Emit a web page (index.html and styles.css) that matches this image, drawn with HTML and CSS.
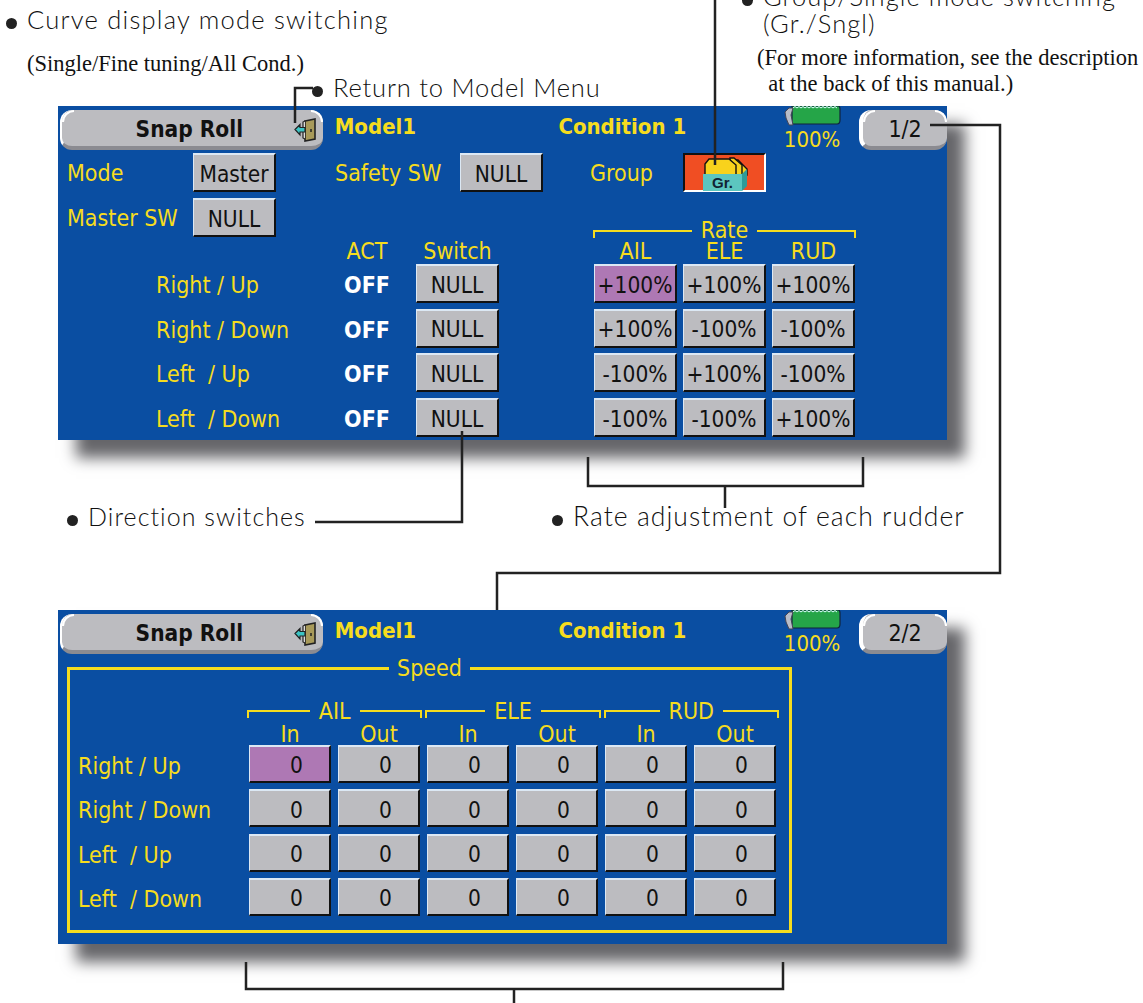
FILE: index.html
```html
<!DOCTYPE html>
<html lang="en">
  <head>
    <meta charset="UTF-8" />
    <title>Snap Roll</title>
    <link rel="stylesheet" href="styles.css">
  </head>
  <body>
    <div class="figure">
      <!-- first screen -->
      <div class="screen screen-one">
        <div class="header">
          <div class="tab title">Snap Roll
            <svg class="door" viewBox="0 0 24 24"><path d="M11 3 L21 1 L21 21 L11 23 Z" fill="#a89a5a" stroke="#222" stroke-width="1.6"/><path d="M11 3 L9 4 L9 20 L11 21" fill="#ddd" stroke="#222" stroke-width="1.2"/><path d="M17 11 v3" stroke="#222" stroke-width="1.5"/><path d="M1 11.5 L6 6.5 V9.5 H11 V14 H6 V17 Z" fill="#3cc4c4" stroke="#222" stroke-width="1.2"/></svg>
          </div>
          <div class="model">Model1</div>
          <div class="condition">Condition 1</div>
          <div class="battery">
            <svg class="battery-icon" viewBox="0 0 58 20"><path d="M9 0 H55 Q57 0 57 3 V14 Q57 18 54 18 H9 Z" fill="#25a548" stroke="#10233c" stroke-width="1.2"/><path d="M10 2 l2 -1.5 l2 1.5 l2 -1.5 l2 1.5 l2 -1.5 l2 1.5 l2 -1.5 l2 1.5 l2 -1.5 l2 1.5 l2 -1.5 l2 1.5 l2 -1.5 l2 1.5 l2 -1.5 l2 1.5 l2 -1.5 l2 1.5 l2 -1.5 l2 1.5 l2 -1.5 l2 1.5" fill="none" stroke="#dff" stroke-width="1"/><path d="M2 6 L6 2 H10 L8 9 L10 19 H6 L3 12 Z" fill="#b8bcc8" stroke="#445" stroke-width="1"/></svg>
            <span>100%</span>
          </div>
          <div class="tab page">1/2</div>
        </div>

        <div class="setup">
          <span class="label">Mode</span>
          <button class="btn">Master</button>
          <span class="label safety">Safety SW</span>
          <button class="btn">NULL</button>
          <span class="label group-label">Group</span>
          <button class="group-btn">
            <svg class="folder" viewBox="0 0 46 37"><g fill="#f8d21c" stroke="#111" stroke-width="1.4"><path d="M31 5 H35 L44 14 V20 H31 Z"/><path d="M27 3 H31 L39 10 V20 H27 Z"/><path d="M2 20 V9 L6 4 H26 L33 10 V20 Z"/></g><path d="M39 19 L44 14 V31 L39 36 Z" fill="#2f9a98"/><rect x="0" y="19" width="39" height="17" fill="#5cc6bf"/><text x="19.5" y="32.5" class="folder-text">Gr.</text></svg>
          </button>
          <span class="label">Master SW</span>
          <button class="btn">NULL</button>
        </div>

        <div class="switches">
          <div class="row head-one">
            <div class="rate-title">
              <div class="bracket"><i class="arm arm-left"></i><span>Rate</span><i class="arm arm-right"></i></div>
            </div>
          </div>
          <div class="row head-two">
            <span class="row-label"></span>
            <span class="row-act label-center">ACT</span>
            <span class="row-switch label-center">Switch</span>
            <div class="rates">
              <span class="label-center">AIL</span>
              <span class="label-center">ELE</span>
              <span class="label-center">RUD</span>
            </div>
          </div>
          <div class="row">
            <span class="row-label">Right / Up</span>
            <span class="row-act off">OFF</span>
            <button class="btn row-switch">NULL</button>
            <div class="rates">
              <button class="btn active">+100%</button>
              <button class="btn">+100%</button>
              <button class="btn">+100%</button>
            </div>
          </div>
          <div class="row">
            <span class="row-label">Right / Down</span>
            <span class="row-act off">OFF</span>
            <button class="btn row-switch">NULL</button>
            <div class="rates">
              <button class="btn">+100%</button>
              <button class="btn">-100%</button>
              <button class="btn">-100%</button>
            </div>
          </div>
          <div class="row">
            <span class="row-label">Left&nbsp; / Up</span>
            <span class="row-act off">OFF</span>
            <button class="btn row-switch">NULL</button>
            <div class="rates">
              <button class="btn">-100%</button>
              <button class="btn">+100%</button>
              <button class="btn">-100%</button>
            </div>
          </div>
          <div class="row">
            <span class="row-label">Left&nbsp; / Down</span>
            <span class="row-act off">OFF</span>
            <button class="btn row-switch">NULL</button>
            <div class="rates">
              <button class="btn">-100%</button>
              <button class="btn">-100%</button>
              <button class="btn">+100%</button>
            </div>
          </div>
        </div>
      </div>

      <!-- second screen -->
      <div class="screen screen-two">
        <div class="header">
          <div class="tab title">Snap Roll
            <svg class="door" viewBox="0 0 24 24"><path d="M11 3 L21 1 L21 21 L11 23 Z" fill="#a89a5a" stroke="#222" stroke-width="1.6"/><path d="M11 3 L9 4 L9 20 L11 21" fill="#ddd" stroke="#222" stroke-width="1.2"/><path d="M17 11 v3" stroke="#222" stroke-width="1.5"/><path d="M1 11.5 L6 6.5 V9.5 H11 V14 H6 V17 Z" fill="#3cc4c4" stroke="#222" stroke-width="1.2"/></svg>
          </div>
          <div class="model">Model1</div>
          <div class="condition">Condition 1</div>
          <div class="battery">
            <svg class="battery-icon" viewBox="0 0 58 20"><path d="M9 0 H55 Q57 0 57 3 V14 Q57 18 54 18 H9 Z" fill="#25a548" stroke="#10233c" stroke-width="1.2"/><path d="M10 2 l2 -1.5 l2 1.5 l2 -1.5 l2 1.5 l2 -1.5 l2 1.5 l2 -1.5 l2 1.5 l2 -1.5 l2 1.5 l2 -1.5 l2 1.5 l2 -1.5 l2 1.5 l2 -1.5 l2 1.5 l2 -1.5 l2 1.5 l2 -1.5 l2 1.5 l2 -1.5 l2 1.5" fill="none" stroke="#dff" stroke-width="1"/><path d="M2 6 L6 2 H10 L8 9 L10 19 H6 L3 12 Z" fill="#b8bcc8" stroke="#445" stroke-width="1"/></svg>
            <span>100%</span>
          </div>
          <div class="tab page">2/2</div>
        </div>

        <div class="speed-frame">
          <div class="frame-title"><span>Speed</span></div>
          <div class="speed-groups">
            <div class="bracket"><i class="arm arm-left"></i><span>AIL</span><i class="arm arm-right"></i></div>
            <div class="bracket"><i class="arm arm-left"></i><span>ELE</span><i class="arm arm-right"></i></div>
            <div class="bracket"><i class="arm arm-left"></i><span>RUD</span><i class="arm arm-right"></i></div>
          </div>
          <div class="speed-row speed-head">
            <span class="speed-label"></span>
            <span>In</span><span>Out</span><span>In</span><span>Out</span><span>In</span><span>Out</span>
          </div>
          <div class="speed-row">
            <span class="speed-label">Right / Up</span>
            <button class="btn num active">0</button><button class="btn num">0</button><button class="btn num">0</button><button class="btn num">0</button><button class="btn num">0</button><button class="btn num">0</button>
          </div>
          <div class="speed-row">
            <span class="speed-label">Right / Down</span>
            <button class="btn num">0</button><button class="btn num">0</button><button class="btn num">0</button><button class="btn num">0</button><button class="btn num">0</button><button class="btn num">0</button>
          </div>
          <div class="speed-row">
            <span class="speed-label">Left&nbsp; / Up</span>
            <button class="btn num">0</button><button class="btn num">0</button><button class="btn num">0</button><button class="btn num">0</button><button class="btn num">0</button><button class="btn num">0</button>
          </div>
          <div class="speed-row">
            <span class="speed-label">Left&nbsp; / Down</span>
            <button class="btn num">0</button><button class="btn num">0</button><button class="btn num">0</button><button class="btn num">0</button><button class="btn num">0</button><button class="btn num">0</button>
          </div>
        </div>
      </div>

      <!-- callouts -->
      <div class="note note-curve">
        <div class="note-title"><i class="dot"></i>Curve display mode switching</div>
        <div class="note-small">(Single/Fine tuning/All Cond.)</div>
      </div>
      <div class="note note-return"><div class="note-title"><i class="dot"></i>Return to Model Menu</div></div>
      <div class="note note-group">
        <div class="note-title"><i class="dot"></i>Group/Single mode switching</div>
        <div class="note-title note-indent">(Gr./Sngl)</div>
        <div class="note-small note-info">(For more information, see the description<br>&nbsp; at the back of this manual.)</div>
      </div>
      <div class="note note-direction"><div class="note-title"><i class="dot"></i>Direction switches</div></div>
      <div class="note note-rate"><div class="note-title"><i class="dot"></i>Rate adjustment of each rudder</div></div>

      <svg class="lines" viewBox="0 0 1143 1003">
        <path d="M313 88 H295 V123" />
        <path d="M715 0 V165" />
        <path d="M930 125 H1000 V573 H497 V610" />
        <path d="M315 522 H462 V431" />
        <path d="M588 457 V486 H863 V457 M725 486 V508" />
        <path d="M246 962 V989 H783 V962 M514 989 V1003" />
      </svg>
    </div>
  </body>
</html>
```

FILE: styles.css
```css
body {
  margin: 0;
  background: white;
}

.figure {
  position: relative;
  width: 1143px;
  height: 1003px;
  overflow: hidden;
  font-family: "DejaVu Sans", sans-serif;
  font-stretch: condensed;
}

.screen {
  width: 889px;
  height: 334px;
  margin-left: 58px;
  background: #0a4ea2;
  box-shadow: 18px 18px 14px #66666a;
  color: #f6dc1e;
  font-size: 23px;
}

.screen-one {
  margin-top: 106px;
}

.screen-two {
  margin-top: 170px;
}

.header {
  display: flex;
  height: 44px;
}

.tab {
  position: relative;
  box-sizing: border-box;
  height: 40px;
  margin-top: 4px;
  background: #bcbcc0;
  color: #111;
  border-bottom: 4px solid #8b8b91;
  border-radius: 12px;
  text-align: center;
  line-height: 38px;
}

/* white arcs on the top corners */
.tab::before,
.tab::after {
  content: "";
  position: absolute;
  top: 0;
  width: 12px;
  height: 12px;
  border-top: 2px solid white;
  box-sizing: border-box;
}

.tab::before {
  left: 0;
  border-left: 2px solid white;
  border-top-left-radius: 12px;
}

.tab::after {
  right: 0;
  border-right: 2px solid white;
  border-top-right-radius: 12px;
}

.title {
  width: 263px;
  margin-left: 2px;
  padding-right: 6px;
  border-left: 2px solid white;
  font-size: 22.5px;
  font-weight: bold;
}

.door {
  position: absolute;
  right: 5px;
  top: 8px;
  width: 24px;
  height: 24px;
}

.model,
.condition {
  font-size: 22px;
  font-weight: bold;
  line-height: 42px;
}

.model {
  width: 224px;
  margin-left: 12px;
}

.condition {
  width: 225px;
}

.battery {
  width: 58px;
  font-size: 22px;
  text-align: center;
  line-height: 27px;
}

.battery-icon {
  display: block;
  width: 58px;
  height: 20px;
}

.page {
  width: 88px;
  margin-left: 18px;
  border-left: 4px solid white;
  font-size: 23px;
}

.setup {
  display: grid;
  grid-template-columns: 126px 83px 59px 125px 83px 47px 93px 83px;
  grid-auto-rows: 39px;
  row-gap: 6px;
  padding: 3px 0 0 9px;
}

.label {
  line-height: 40px;
}

.safety {
  grid-column: 4;
}

.group-label {
  grid-column: 7;
}

.btn {
  box-sizing: border-box;
  width: 83px;
  height: 39px;
  padding: 3px 0 0;
  background: #bcbcc0;
  color: #111;
  border: 2px solid #111;
  border-top-color: #dce8f4;
  border-left-color: #dce8f4;
  border-left-width: 1px;
  font: inherit;
  font-size: 22.5px;
  font-stretch: condensed;
  line-height: 1;
}

.btn.active {
  background: #ae78b4;
}

.group-btn {
  position: relative;
  box-sizing: border-box;
  width: 83px;
  height: 39px;
  padding: 0;
  background: #f04e23;
  border: 2px solid white;
  border-top-color: #111;
  border-left-color: #111;
}

.folder {
  position: absolute;
  left: 18px;
  top: 0;
  width: 46px;
  height: 37px;
}

.folder-text {
  font-size: 15px;
  font-weight: bold;
  fill: #123;
  text-anchor: middle;
}

.switches {
  margin-top: -16px;
}

.row {
  display: flex;
  height: 39px;
  margin-bottom: 5.7px;
  line-height: 42px;
}

.head-one {
  height: 19px;
  margin-bottom: 0;
  padding-left: 535px;
  line-height: 19px;
}

.rate-title {
  width: 263px;
}

.head-two {
  height: 24px;
  margin-bottom: 0;
  line-height: 22px;
}

.row-label {
  width: 98px;
  margin-left: 98px;
  flex: 0 0 179px;
}

.row-act {
  flex: 0 0 64px;
  text-align: center;
}

.off {
  color: white;
  font-weight: bold;
}

.row-switch {
  flex: 0 0 83px;
  margin-left: 17px;
}

.label-center {
  text-align: center;
}

.rates {
  display: grid;
  grid-template-columns: repeat(3, 83px);
  column-gap: 6px;
  margin-left: 95px;
}

.bracket {
  display: flex;
  flex: 1;
  align-items: center;
  text-align: center;
}

.bracket span {
  padding: 0 9px;
}

.arm {
  flex: 1;
  height: 6px;
  margin-top: 6px;
  border-top: 2.5px solid #f6dc1e;
}

.arm-left {
  border-left: 2.5px solid #f6dc1e;
}

.arm-right {
  border-right: 2.5px solid #f6dc1e;
}

.speed-frame {
  box-sizing: border-box;
  width: 725px;
  height: 266px;
  margin: 13px 0 0 9px;
  border: 3px solid #f6dc1e;
}

.frame-title {
  height: 22px;
  margin-top: -13px;
  text-align: center;
  line-height: 22px;
}

.frame-title span {
  padding: 0 8px;
  background: #0a4ea2;
}

.speed-groups {
  display: flex;
  gap: 3px;
  height: 22px;
  margin: 21px 0 0 177px;
  width: 532px;
  line-height: 22px;
}

.speed-row {
  display: flex;
  gap: 7px;
  height: 38px;
  margin-bottom: 6.3px;
  line-height: 42px;
}

.speed-head {
  height: 23px;
  margin: 0;
  line-height: 24px;
  text-align: center;
}

.speed-head span {
  width: 82px;
}

.speed-label {
  flex: 0 0 172px;
  padding-left: 8px;
  width: 172px !important;
  box-sizing: border-box;
  text-align: left;
}

.btn.num {
  width: 82px;
  height: 38px;
  padding-left: 14px;
}

.note {
  position: absolute;
  color: #111;
}

.note-title {
  font-family: Lato, sans-serif;
  font-stretch: normal;
  font-weight: 300;
  font-size: 25.5px;
  line-height: 27px;
  letter-spacing: 1.05px;
  white-space: nowrap;
}

.dot {
  display: inline-block;
  width: 11px;
  height: 11px;
  margin-right: 10px;
  border-radius: 50%;
  background: #222;
}

.note-small {
  font-family: "Liberation Serif", serif;
  font-stretch: normal;
  font-size: 22.5px;
  line-height: 26px;
  white-space: nowrap;
}

.note-curve {
  left: 6px;
  top: 6px;
}

.note-curve .note-title {
  letter-spacing: 1.25px;
}

.note-curve .note-small {
  margin: 18px 0 0 21px;
}

.note-return {
  left: 312px;
  top: 74px;
}

.note-return .note-title {
  letter-spacing: 0.8px;
}

.note-group {
  left: 742px;
  top: -17px;
}

.note-indent {
  margin-left: 21px;
}

.note-info {
  margin: 8px 0 0 15px;
}

.note-direction {
  left: 67px;
  top: 503px;
}

.note-direction .note-title {
  font-size: 25px;
}

.note-rate {
  left: 552px;
  top: 503px;
}

.note-rate .note-title {
  font-size: 26.5px;
}

.lines {
  position: absolute;
  left: 0;
  top: 0;
  width: 1143px;
  height: 1003px;
  pointer-events: none;
  fill: none;
  stroke: #222;
  stroke-width: 2.5;
}
```
